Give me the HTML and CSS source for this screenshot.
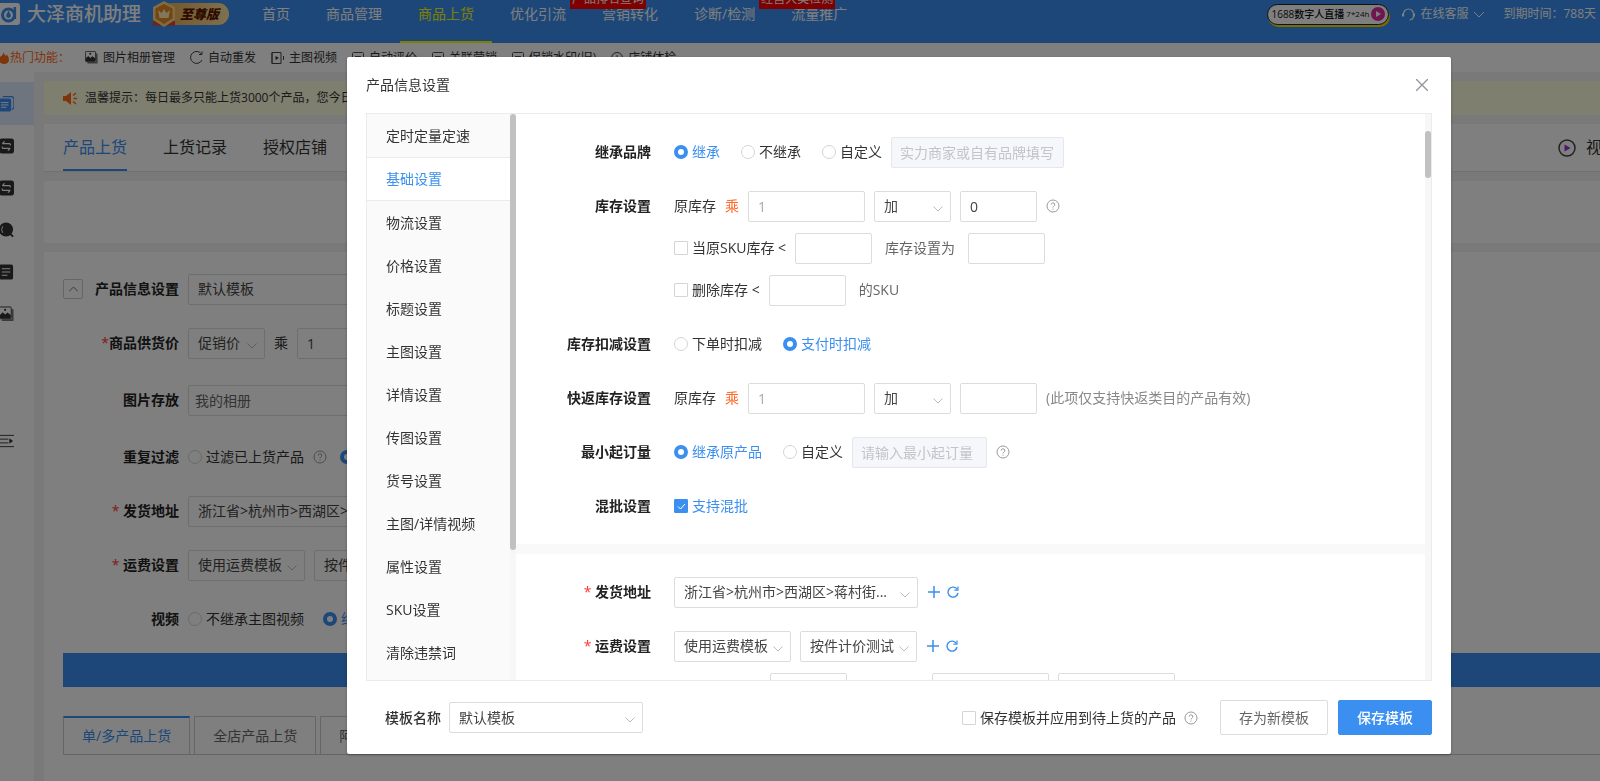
FILE: index.html
```html
<!DOCTYPE html>
<html lang="zh-CN">
<head>
    <meta charset="UTF-8">
    <meta name="viewport" content="width=device-width, initial-scale=1.0">
    <title>大泽商机助理</title>
    <link rel="stylesheet" href="styles.css">
</head>
<body>

    <!-- shared icons -->
    <svg class="sprite" aria-hidden="true">
        <symbol id="i-help" viewBox="0 0 14 14"><circle cx="7" cy="7" r="6" fill="none" stroke="#999"/><path d="M5.2 5.6a1.8 1.8 0 1 1 2.6 1.6q-.8.4-.8 1.3M7 9.6v1" fill="none" stroke="#999"/></symbol>
        <symbol id="i-plus" viewBox="0 0 12 12"><path d="M6 0v12M0 6h12" stroke="#3a8ff0" stroke-width="1.5"/></symbol>
        <symbol id="i-reload" viewBox="0 0 12 12"><path d="M10.3 3.4A5 5 0 1 0 11 7" fill="none" stroke="#3a8ff0" stroke-width="1.4"/><path d="M11 .6v3.6H7.4" fill="none" stroke="#3a8ff0" stroke-width="1.2"/></symbol>
        <symbol id="i-swap" viewBox="0 0 16 16"><rect width="16" height="16" rx="3" fill="#333"/><path d="M12 5.5H3.5M6 3L3.5 5.5M3.5 10.5H12M9.5 13l2.5-2.5M12 5.5v2M3.5 8.5v2" fill="none" stroke="#fff" stroke-width="1.2"/></symbol>
        <symbol id="i-photo" viewBox="0 0 16 16"><path d="M3 14.5h11.5V3" fill="none" stroke="#777" stroke-width="2"/><rect x=".5" y=".5" width="12.500" height="12.500" rx="1" fill="#fff" stroke="#333"/><path d="M1 12.500V9l3-3 2.500 2.500L9 6.500 12.500 9v3.500z" fill="#333"/><circle cx="6.500" cy="3.500" r="1.200" fill="#333"/></symbol>
        <symbol id="i-box" viewBox="0 0 12 12"><rect x=".5" y=".5" width="11" height="11" rx="1" fill="none" stroke="#555"/><path d="M3 4.500h6M3 7.500h6" stroke="#555"/></symbol>
    </svg>

    <header class="topbar">
        <svg class="logo" viewBox="0 0 20 22"><rect x="-4" width="24" height="22" rx="3" fill="#fff"/><circle cx="8.500" cy="12" r="6" fill="none" stroke="#3a8ff0" stroke-width="3"/><path d="M14.800 4v12" stroke="#3a8ff0" stroke-width="2.600"/><path d="M8.500 7.500l2 4a2.300 2.300 0 1 1-4 0z" fill="#3a8ff0"/></svg>
        <span class="brand">大泽商机助理</span>
        <span class="vip">
            <svg class="medal" viewBox="0 0 26 28"><path d="M2 21l5-2 3 8-4-2-4 1zM24 21l-5-2-3 8 4-2 4 1z" fill="#e0452a"/><path d="M13 1l11 6v13l-11 7-11-7V7z" fill="#ffd98a"/><path d="M13 4l8.500 4.500v10L13 24l-8.500-5.500v-10z" fill="#e88a1c"/><path d="M7 10l3.500 3L13 9l2.500 4L19 10l-1.500 8h-9z" fill="#fff0bd"/></svg>
            至尊版
        </span>
        <nav class="mainnav">
            <a href="#">首页</a>
            <a href="#">商品管理</a>
            <a href="#" class="active">商品上货</a>
            <a href="#">优化引流</a>
            <a href="#">营销转化<span class="flag">产品排名查询</span></a>
            <a href="#">诊断/检测</a>
            <a href="#">流量推广<span class="flag">经营大类检测</span></a>
        </nav>
        <div class="topright">
            <a href="#" class="live">1688数字人直播 <small>7*24h</small>
                <svg width="14" height="14" viewBox="0 0 14 14"><circle cx="7" cy="7" r="7" fill="#e02ba0"/><path d="M5 4l5 3-5 3z" fill="#fff"/></svg>
            </a>
            <a href="#" class="service">
                <svg width="13" height="13" viewBox="0 0 13 13"><path d="M1.500 8V6a5 5 0 0 1 10 0v2M11.500 8q0 3.500-4 4" fill="none" stroke="#fff" stroke-width="1.200"/><path d="M1 5.500v3M12 5.500v3" stroke="#fff" stroke-width="2"/></svg>
                在线客服
                <svg width="12" height="7" viewBox="0 0 12 7"><path d="M1 1l5 5 5-5" fill="none" stroke="#fff"/></svg>
            </a>
            <span class="expire">到期时间：788天</span>
        </div>
    </header>

    <div class="hotbar">
        <span class="hot"><svg width="9" height="12" viewBox="0 0 9 12"><path d="M3.500 0q.5 2.500 2.500 4l1-1.500Q9 5 9 8q-.5 4-5 4T-1 8q0-3 3-4.500Q3.500 2 3.500 0z" fill="#ff6a13"/></svg>热门功能：</span>
        <a href="#"><svg width="13" height="13"><use href="#i-photo"/></svg>图片相册管理</a>
        <a href="#"><svg width="13" height="13" viewBox="0 0 13 13"><path d="M11.500 3A6 6 0 1 0 12 9M12 .5v3H9" fill="none" stroke="#444"/></svg>自动重发</a>
        <a href="#"><svg width="13" height="12" viewBox="0 0 13 12"><path d="M3 .5H1v11h2M1 .5h9v11H1zM12.500 4v4" fill="none" stroke="#444"/><path d="M4.500 4v4L8 6z" fill="#333"/></svg>主图视频</a>
        <a href="#"><svg width="12" height="12"><use href="#i-box"/></svg>自动评价</a>
        <a href="#"><svg width="12" height="12"><use href="#i-box"/></svg>关联营销</a>
        <a href="#"><svg width="12" height="12"><use href="#i-box"/></svg>促销水印(旧)</a>
        <a href="#"><svg width="12" height="12" viewBox="0 0 12 12"><circle cx="6" cy="6" r="5.500" fill="none" stroke="#444"/><path d="M6 3v4" stroke="#444"/></svg>店铺体检</a>
    </div>

    <div class="page">
        <aside class="rail">
            <a href="#" class="active" aria-label="上货"><svg viewBox="0 0 16 16"><path d="M4 0h10l2 2v10l-2 2" fill="none" stroke="#3a8ff0" stroke-width="1.500"/><rect y="2" width="13" height="14" rx="2" fill="#3a8ff0"/><path d="M2 6.500h8M2 9h8M2 11.500h6" stroke="#fff"/></svg></a>
            <a href="#" aria-label="同步"><svg><use href="#i-swap"/></svg></a>
            <a href="#" aria-label="转换"><svg><use href="#i-swap"/></svg></a>
            <a href="#" aria-label="查询"><svg viewBox="0 0 16 16"><circle cx="7.500" cy="7.500" r="7.500" fill="#333"/><path d="M11 11l4 4" stroke="#333" stroke-width="2"/><path d="M4 4q-2.500 3.500 0 7" fill="none" stroke="#fff"/></svg></a>
            <a href="#" aria-label="记录"><svg viewBox="0 0 16 16"><rect width="15" height="16" rx="2" fill="#333"/><path d="M3 4.500h9M3 8h9M3 11.500h6" stroke="#fff" stroke-width="1.200"/></svg></a>
            <a href="#" aria-label="相册"><svg><use href="#i-photo"/></svg></a>
            <button type="button" class="fold" aria-label="收起"><svg viewBox="0 0 16 14"><path d="M0 1h16M0 5h10M0 9h10M0 13h16" stroke="#333"/><path d="M11 4l4 3-4 3z" fill="#333"/></svg></button>
        </aside>

        <main class="content">
            <div class="tip">
                <svg width="15" height="13" viewBox="0 0 15 13"><path d="M0 4h3l5-4v13L3 9H0z" fill="#ff6a13"/><path d="M10 3.500L13 1M10.500 6.500H14M10 9.500l3 2.500" stroke="#ff6a13" stroke-width="1.400"/></svg>
                <span>温馨提示：</span><span>每日最多只能上货3000个产品，您今日还可上货3000个产品</span>
            </div>

            <div class="tabs">
                <a href="#" class="active">产品上货</a>
                <a href="#">上货记录</a>
                <a href="#">授权店铺</a>
                <a href="#" class="video"><svg width="18" height="18" viewBox="0 0 18 18"><circle cx="9" cy="9" r="8" fill="none" stroke="#444" stroke-width="1.500"/><path d="M6.500 5.500l6 3.500-6 3.500z" fill="#a52bd0"/></svg>视频</a>
            </div>

            <div class="card blank"></div>

            <div class="card form">
                <div class="row">
                    <div class="name"><button type="button" class="toggle" aria-label="折叠"><svg width="9" height="6" viewBox="0 0 9 6"><path d="M0 5.500L4.500 1 9 5.500" fill="none" stroke="#777"/></svg></button><label for="p-tpl">产品信息设置</label></div>
                    <select id="p-tpl" class="w-xl"><option>默认模板</option></select>
                </div>
                <div class="row wide">
                    <label class="name" for="p-price"><i>*</i>商品供货价</label>
                    <select id="p-price" class="w-s"><option>促销价</option></select>
                    <span>乘</span>
                    <input type="text" class="w-m" value="1" aria-label="倍数">
                </div>
                <div class="row wide">
                    <label class="name" for="p-album">图片存放</label>
                    <input type="text" id="p-album" class="w-xl album" value="我的相册">
                </div>
                <div class="row">
                    <span class="name">重复过滤</span>
                    <label class="opt"><input type="radio" name="p-filter">过滤已上货产品</label>
                    <svg class="help"><use href="#i-help"/></svg>
                    <label class="opt"><input type="radio" name="p-filter" checked>不过滤</label>
                </div>
                <div class="row">
                    <label class="name" for="p-addr"><i>*</i> 发货地址</label>
                    <select id="p-addr" class="w-xl"><option>浙江省>杭州市>西湖区>蒋村街...</option></select>
                </div>
                <div class="row">
                    <label class="name" for="p-fee"><i>*</i> 运费设置</label>
                    <select id="p-fee" class="w-m"><option>使用运费模板</option></select>
                    <select class="w-m" aria-label="运费模板"><option>按件计价测试</option></select>
                </div>
                <div class="row">
                    <span class="name">视频</span>
                    <label class="opt"><input type="radio" name="p-video">不继承主图视频</label>
                    <label class="opt"><input type="radio" name="p-video" checked>继承主图视频</label>
                </div>
                <div class="bluebar"></div>
                <div class="subtabs">
                    <a href="#" class="active">单/多产品上货</a>
                    <a href="#">全店产品上货</a>
                    <a href="#">阿里产品上货</a>
                </div>
            </div>
        </main>
    </div>

    <div class="mask">
        <form class="dialog" role="dialog" aria-labelledby="dlg-title">
            <div class="dialog-head">
                <h2 id="dlg-title">产品信息设置</h2>
                <button type="button" class="close" aria-label="关闭"><svg width="12" height="12" viewBox="0 0 12 12"><path d="M0 0l12 12M12 0L0 12" stroke="#909399" stroke-width="1.300"/></svg></button>
            </div>

            <div class="dialog-body">
                <nav class="menu">
                    <a href="#">定时定量定速</a>
                    <a href="#" class="active">基础设置</a>
                    <a href="#">物流设置</a>
                    <a href="#">价格设置</a>
                    <a href="#">标题设置</a>
                    <a href="#">主图设置</a>
                    <a href="#">详情设置</a>
                    <a href="#">传图设置</a>
                    <a href="#">货号设置</a>
                    <a href="#">主图/详情视频</a>
                    <a href="#">属性设置</a>
                    <a href="#">SKU设置</a>
                    <a href="#">清除违禁词</a>
                </nav>
                <div class="bar menu-bar"><span></span></div>

                <div class="panel">
                    <section>
                        <div class="row">
                            <span class="name">继承品牌</span>
                            <div class="opts">
                                <label class="opt"><input type="radio" name="brand" checked>继承</label>
                                <label class="opt"><input type="radio" name="brand">不继承</label>
                                <label class="opt"><input type="radio" name="brand">自定义</label>
                            </div>
                            <input type="text" class="w-l" placeholder="实力商家或自有品牌填写" aria-label="自定义品牌" disabled>
                        </div>
                        <div class="row">
                            <span class="name">库存设置</span>
                            <span>原库存</span>
                            <span class="orange">乘</span>
                            <input type="text" class="w-m" placeholder="1" aria-label="库存倍数">
                            <select class="w-s" aria-label="库存加减"><option>加</option></select>
                            <input type="text" class="w-s" value="0" aria-label="库存加数">
                            <svg class="help"><use href="#i-help"/></svg>
                        </div>
                        <div class="row sub">
                            <label class="opt"><input type="checkbox">当原SKU库存 &lt;</label>
                            <input type="text" class="w-s" aria-label="原SKU库存">
                            <span class="gray">库存设置为</span>
                            <input type="text" class="w-s" aria-label="库存设置为">
                        </div>
                        <div class="row sub">
                            <label class="opt"><input type="checkbox">删除库存 &lt;</label>
                            <input type="text" class="w-s" aria-label="删除库存">
                            <span class="gray">的SKU</span>
                        </div>
                        <div class="row">
                            <span class="name">库存扣减设置</span>
                            <div class="opts">
                                <label class="opt"><input type="radio" name="deduct">下单时扣减</label>
                                <label class="opt"><input type="radio" name="deduct" checked>支付时扣减</label>
                            </div>
                        </div>
                        <div class="row">
                            <span class="name">快返库存设置</span>
                            <span>原库存</span>
                            <span class="orange">乘</span>
                            <input type="text" class="w-m" placeholder="1" aria-label="快返库存倍数">
                            <select class="w-s" aria-label="快返库存加减"><option>加</option></select>
                            <input type="text" class="w-s" aria-label="快返库存加数">
                            <span class="note">(此项仅支持快返类目的产品有效)</span>
                        </div>
                        <div class="row">
                            <span class="name">最小起订量</span>
                            <div class="opts">
                                <label class="opt"><input type="radio" name="moq" checked>继承原产品</label>
                                <label class="opt"><input type="radio" name="moq">自定义</label>
                            </div>
                            <input type="text" class="w-moq" placeholder="请输入最小起订量" aria-label="最小起订量" disabled>
                            <svg class="help"><use href="#i-help"/></svg>
                        </div>
                        <div class="row">
                            <span class="name">混批设置</span>
                            <label class="opt"><input type="checkbox" checked>支持混批</label>
                        </div>
                    </section>

                    <section>
                        <div class="row">
                            <label class="name" for="addr"><i>*</i> 发货地址</label>
                            <select id="addr" class="w-xl"><option>浙江省>杭州市>西湖区>蒋村街...</option></select>
                            <div class="acts"><button type="button" aria-label="新增地址"><svg><use href="#i-plus"/></svg></button><button type="button" aria-label="刷新地址"><svg><use href="#i-reload"/></svg></button></div>
                        </div>
                        <div class="row">
                            <label class="name" for="fee"><i>*</i> 运费设置</label>
                            <select id="fee" class="w-m"><option>使用运费模板</option></select>
                            <select class="w-m" aria-label="运费模板"><option>按件计价测试</option></select>
                            <div class="acts"><button type="button" aria-label="新增模板"><svg><use href="#i-plus"/></svg></button><button type="button" aria-label="刷新模板"><svg><use href="#i-reload"/></svg></button></div>
                        </div>
                        <div class="row sub weight">
                            <input type="text" class="w-s" aria-label="重量">
                            <input type="text" class="w-m" aria-label="运费起">
                            <input type="text" class="w-m" aria-label="运费止">
                        </div>
                    </section>
                </div>
                <div class="bar panel-bar"><span></span></div>
            </div>

            <div class="dialog-foot">
                <label class="foot-name" for="tpl">模板名称</label>
                <select id="tpl"><option>默认模板</option></select>
                <label class="opt apply"><input type="checkbox">保存模板并应用到待上货的产品</label>
                <svg class="help"><use href="#i-help"/></svg>
                <button type="button" class="btn">存为新模板</button>
                <button type="submit" class="btn primary">保存模板</button>
            </div>
        </form>
    </div>

</body>
</html>
```
FILE: styles.css
```css
* {
    box-sizing: border-box;
}
body {
    margin: 0;
    height: 100vh;
    overflow: hidden;
    display: flex;
    flex-direction: column;
    background: #f3f3f3;
    color: #333;
    font-family: "Open Sans", "Noto Sans CJK SC", sans-serif;
    font-size: 14px;
    line-height: 20px;
    white-space: nowrap;
}
a {
    color: inherit;
    text-decoration: none;
}
svg {
    flex: none;
}
.sprite {
    position: absolute;
    width: 0;
    height: 0;
}
button {
    font: inherit;
    padding: 0;
    border: none;
    background: none;
    cursor: pointer;
}

/* top bar */
.topbar {
    flex: none;
    display: flex;
    align-items: center;
    height: 43px;
    padding-bottom: 15px;
    background: #3a8ff0;
    color: #fff;
}
.logo {
    width: 20px;
    height: 22px;
    margin-right: 7px;
}
.brand {
    font-size: 19px;
    font-weight: 500;
}
.vip {
    display: flex;
    align-items: center;
    height: 22px;
    margin-left: 20px;
    padding-right: 10px;
    border-radius: 11px;
    background: linear-gradient(90deg, #e9a94d, #ffe2a0);
    color: #5a1800;
    font-size: 13px;
    font-weight: 900;
    font-style: italic;
}
.medal {
    width: 26px;
    height: 28px;
    margin-left: -10px;
    margin-right: 3px;
}
.mainnav {
    display: flex;
    margin-left: 15px;
}
.mainnav a {
    position: relative;
    height: 43px;
    margin-bottom: -15px;
    padding: 4px 18px 0;
}
.mainnav .active {
    color: #ff0;
    border-bottom: 2px solid #ff0;
}
.flag {
    position: absolute;
    top: -11px;
    right: 30px;
    padding: 0 2px;
    border-radius: 8px 0 0 0;
    background: #f00;
    color: #fff;
    font-size: 12px;
}
.topright {
    display: flex;
    align-items: center;
    gap: 13px;
    margin-left: auto;
    padding-right: 4px;
    font-size: 12px;
}
.live {
    display: flex;
    align-items: center;
    gap: 2px;
    height: 21px;
    padding: 0 3px;
    border: 1px solid #222;
    border-radius: 11px;
    background: #fff;
    box-shadow: 1px 2px 0 #f5d800;
    color: #111;
    font-size: 10px;
    font-weight: 500;
}
.live small {
    font-size: 8px;
}
.service {
    display: flex;
    align-items: center;
    gap: 5px;
    margin-right: 5px;
}

/* quick links */
.hotbar {
    flex: none;
    display: flex;
    align-items: center;
    gap: 15px;
    height: 29px;
    background: #fff;
    font-size: 12px;
}
.hotbar a, .hot {
    display: flex;
    align-items: center;
    gap: 5px;
}
.hotbar .hot {
    gap: 1px;
    color: #ff6a13;
}

/* page */
.page {
    flex: 1;
    display: flex;
    gap: 10px;
    min-height: 0;
}
.rail {
    flex: none;
    width: 34px;
    padding-top: 10px;
    background: #fff;
}
.rail a {
    display: flex;
    align-items: center;
    height: 42px;
}
.rail .active {
    height: 43px;
    background: #dcebfd;
}
.rail svg {
    width: 15px;
    height: 16px;
    margin-left: -1px;
}
.fold {
    margin-top: 98px;
}
.content {
    flex: 1;
    display: flex;
    flex-direction: column;
    gap: 9px;
    min-width: 0;
    padding-top: 9px;
}
.tip {
    flex: none;
    display: flex;
    align-items: center;
    height: 34px;
    padding-left: 19px;
    background: #fffee0;
    font-size: 12px;
}
.tip svg {
    margin-right: 7px;
}
.tabs {
    flex: none;
    display: flex;
    gap: 36px;
    height: 48px;
    padding-left: 19px;
    background: #fff;
    border-bottom: 1px solid #e2e2e2;
    font-size: 16px;
    line-height: 47px;
    overflow: hidden;
}
.tabs .active {
    color: #3a8ff0;
    border-bottom: 2px solid #3a8ff0;
}
.video {
    display: flex;
    align-items: center;
    gap: 10px;
    width: 42px;
    margin-left: auto;
}
.card {
    background: #fff;
}
.blank {
    flex: none;
    height: 62px;
}
.form {
    flex: 1;
    padding: 22px 0 0 19px;
}
.form .row {
    gap: 9px;
}
.form .row.wide {
    margin-bottom: 27px;
}
.form .name {
    width: 116px;
    margin-right: 0;
}
.form .name:has(.toggle) {
    display: flex;
    align-items: center;
    justify-content: space-between;
}
.toggle {
    display: flex;
    align-items: center;
    justify-content: center;
    width: 20px;
    height: 20px;
    border: 1px solid #ccc;
    border-radius: 2px;
}
.form .album {
    padding-left: 6px;
    color: #666;
}
.form .help + .opt {
    margin-left: 4px;
}
.form .opt + .opt {
    margin-left: 10px;
}
.bluebar {
    height: 34px;
    margin-top: -5px;
    background: #3a8ff0;
}
.subtabs {
    display: flex;
    gap: 4px;
    margin-top: 29px;
    border-bottom: 1px solid #ccc;
}
.subtabs a {
    padding: 9px 18px 8px;
    border: 1px solid #ccc;
    border-bottom: none;
    color: #666;
}
.subtabs .active {
    border-top: 2px solid #3a8ff0;
    color: #3a8ff0;
    padding-top: 8px;
}

/* form parts */
.row {
    display: flex;
    align-items: center;
    gap: 9px;
    height: 30px;
    margin-bottom: 24px;
}
.name {
    flex: none;
    width: 135px;
    margin-right: 14px;
    text-align: right;
    font-weight: 600;
    color: #222;
}
.name i {
    color: #f33;
    font-style: normal;
    font-weight: 400;
}
input, select {
    font: inherit;
    color: #444;
    margin: 0;
}
input[type="text"], select {
    flex: none;
    height: 31px;
    padding: 0 9px;
    border: 1px solid #dcdcdc;
    border-radius: 2px;
    background-color: #fff;
    outline: none;
}
input::placeholder {
    color: #aaa;
}
input[type="text"]:disabled {
    padding: 0 8px;
    background: #f5f7fa;
    border-color: #e4e7ed;
}
input:disabled::placeholder {
    color: #c0c4cc;
}
select {
    appearance: none;
    background-image: url("data:image/svg+xml,%3Csvg xmlns='http://www.w3.org/2000/svg' width='10' height='6'%3E%3Cpath d='M.5.5L5 5 9.500.5' fill='none' stroke='%23b8bcc4'/%3E%3C/svg%3E");
    background-repeat: no-repeat;
    background-position: right 7px top 14px;
}
.w-s {
    width: 77px;
}
.w-m {
    width: 117px;
}
.w-moq {
    width: 135px;
}
.w-l {
    width: 173px;
}
.w-xl {
    width: 244px;
}
input[type="radio"], input[type="checkbox"] {
    appearance: none;
    flex: none;
    width: 14px;
    height: 14px;
    border: 1px solid #d5d5d5;
    background: #fff;
}
input[type="radio"] {
    border-radius: 50%;
}
input[type="radio"]:checked {
    border: 4px solid #3a8ff0;
}
input[type="checkbox"] {
    border-radius: 1px;
}
input[type="checkbox"]:checked {
    border-color: #3a8ff0;
    background: #3a8ff0 url("data:image/svg+xml,%3Csvg xmlns='http://www.w3.org/2000/svg' width='11' height='11'%3E%3Cpath d='M2 5.500L4.500 8 9 3' fill='none' stroke='white'/%3E%3C/svg%3E") center no-repeat;
}
.opt {
    display: flex;
    align-items: center;
    gap: 4px;
}
.opt:has(:checked) {
    color: #3a8ff0;
}
.opts {
    display: flex;
    gap: 21px;
}
.help {
    width: 14px;
    height: 14px;
}
.orange {
    color: #ff6a2a;
}
.gray {
    padding: 0 4px;
    color: #666;
}
.note {
    color: #888;
}

/* dialog */
.mask {
    position: fixed;
    inset: 0;
    display: flex;
    padding: 57px 149px 27px 347px;
    background: rgba(0, 0, 0, 0.5);
}
.dialog {
    flex: 1;
    display: flex;
    flex-direction: column;
    min-width: 0;
    padding: 0 19px;
    border-radius: 2px;
    background: #fff;
    box-shadow: 0 1px 3px rgba(0, 0, 0, 0.3);
}
.dialog-head {
    flex: none;
    display: flex;
    align-items: center;
    justify-content: space-between;
    height: 56px;
}
.dialog-head h2 {
    margin: 0;
    font-size: 14px;
    font-weight: 400;
}
.close {
    display: flex;
    padding: 4px;
}
.dialog-body {
    flex: 1;
    display: flex;
    min-height: 0;
    border: 1px solid #ebebeb;
}
.menu {
    flex: none;
    width: 143px;
    overflow: hidden;
    background: #fafafa;
}
.menu a {
    display: block;
    height: 43px;
    padding-left: 19px;
    line-height: 43px;
}
.menu .active {
    height: 44px;
    border: solid #ebebeb;
    border-width: 1px 0;
    background: #fff;
    color: #3a8ff0;
    line-height: 42px;
}
.bar {
    flex: none;
    width: 6px;
    background: #f7f7f7;
}
.bar span {
    display: block;
    border-radius: 3px;
    background: #c1c1c1;
}
.menu-bar span {
    height: 77%;
}
.panel-bar {
    padding-top: 17px;
}
.panel-bar span {
    height: 47px;
}
.panel {
    flex: 1;
    min-width: 0;
    overflow: hidden;
}
.panel section {
    padding: 23px 0;
    border-bottom: 10px solid #f9f9f9;
}
.panel section .row:last-child {
    margin-bottom: 0;
}
.panel .row:has(+ .sub) {
    margin-bottom: 12px;
}
.sub {
    padding-left: 158px;
}
.sub.weight {
    padding-left: 254px;
}
.weight .w-s {
    margin-right: 76px;
}
.acts {
    display: flex;
    gap: 7px;
    padding-left: 1px;
}
.acts button {
    display: flex;
}
.acts svg {
    width: 12px;
    height: 12px;
}
.dialog-foot {
    flex: none;
    display: flex;
    align-items: center;
    height: 73px;
    padding-left: 19px;
}
.foot-name {
    margin-right: 8px;
    font-weight: 500;
}
.dialog-foot select {
    width: 194px;
}
.apply {
    margin-left: auto;
    margin-right: 8px;
}
.btn {
    height: 35px;
    margin-left: 10px;
    padding: 0 18px;
    border: 1px solid #dcdcdc;
    border-radius: 2px;
    background: #fff;
    color: #666;
}
.help + .btn {
    margin-left: 22px;
}
.primary {
    border-color: #3a8ff0;
    background: #3a8ff0;
    color: #fff;
    font-weight: 500;
}
```
